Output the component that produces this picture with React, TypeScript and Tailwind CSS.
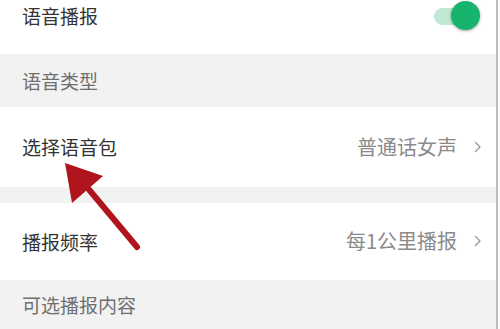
import React from 'react';

const font = { fontFamily: '"Noto Sans CJK SC", "Noto Sans", sans-serif' };

const Chevron: React.FC = () => (
  <svg width="8" height="12" viewBox="0 0 8 12" className="ml-[17px] mr-[14px]">
    <path d="M1.5 1.5 L6 6 L1.5 10.5" fill="none" stroke="#9a9a9a" strokeWidth="1.4" strokeLinecap="round" strokeLinejoin="round" />
  </svg>
);

const SectionHeader: React.FC<{ label: string; height: string }> = ({ label, height }) => (
  <div className={`flex items-center bg-[#f2f2f2] pl-[22px] ${height}`}>
    <span className="text-[19px] text-[#6f6f6f] leading-none">{label}</span>
  </div>
);

const ValueRow: React.FC<{ label: string; value: string; height: string }> = ({ label, value, height }) => (
  <div className={`flex items-center bg-white pl-[22px] ${height}`}>
    <span className="text-[19px] text-[#333] leading-none">{label}</span>
    <span className="ml-auto text-[20px] text-[#8a8a8a] leading-none">{value}</span>
    <Chevron />
  </div>
);

const Toggle: React.FC = () => (
  <div className="relative w-[46px] h-[30px] mr-[16px] mt-[1px]">
    <div className="absolute left-0 top-[7px] w-[40px] h-[17px] rounded-full bg-[#bfe9d3]" />
    <div className="absolute right-0 top-0 w-[29px] h-[29px] rounded-full bg-[#17b46d] shadow-[0_1px_3px_rgba(0,0,0,0.35)]" />
  </div>
);

export default function App() {
  return (
    <div className="relative w-[500px] h-[329px] overflow-hidden bg-white flex" style={font}>
      <div className="flex flex-col w-[496px]">
        <div className="flex items-start justify-between bg-white pl-[22px] h-[55px]">
          <span className="text-[19px] text-[#333] leading-none mt-[6px]">语音播报</span>
          <Toggle />
        </div>
        <SectionHeader label="语音类型" height="h-[53px]" />
        <ValueRow label="选择语音包" value="普通话女声" height="h-[81px]" />
        <div className="h-[16px] bg-[#f2f2f2]" />
        <ValueRow label="播报频率" value="每1公里播报" height="h-[78px]" />
        <SectionHeader label="可选播报内容" height="h-[50px]" />
      </div>
      <div className="w-[2px] bg-[#bdbdbd]" />
      <div className="flex-1 bg-white" />

      <svg className="absolute left-0 top-0 pointer-events-none" width="500" height="329" viewBox="0 0 500 329">
        <line x1="86" y1="186" x2="137" y2="247" stroke="#b0141c" strokeWidth="6" strokeLinecap="round" />
        <polygon points="65,163 103,176 72,203" fill="#b0141c" />
      </svg>
    </div>
  );
}
